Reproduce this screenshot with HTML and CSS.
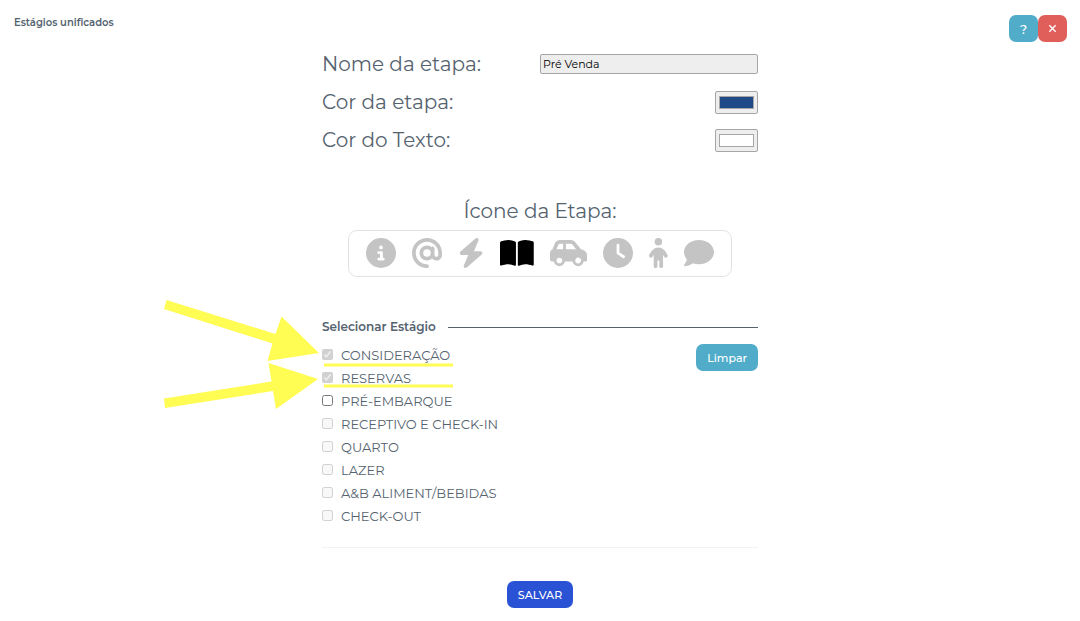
FILE: index.html
```html
<!DOCTYPE html>
<html lang="pt-BR">
  <head>
    <meta charset="UTF-8" />
    <meta name="viewport" content="width=device-width, initial-scale=1.0" />
    <title>Estágios unificados</title>
    <link rel="stylesheet" href="styles.css">
  </head>
  <body>
    <header class="header">
      <h1 class="title">Estágios unificados</h1>
      <div class="header-actions">
        <button type="button" class="btn btn-info btn-icon" aria-label="Ajuda">?</button>
        <button type="button" class="btn btn-danger btn-icon" aria-label="Fechar">
          <svg class="close-icon" viewBox="0 0 10 10"><path d="M1.5 1.5l7 7M8.5 1.5l-7 7" /></svg>
        </button>
      </div>
    </header>

    <form class="stage-form">
      <div class="form-row">
        <label class="form-label" for="stageName">Nome da etapa:</label>
        <input type="text" id="stageName" class="form-input" value="Pré Venda" />
      </div>
      <div class="form-row">
        <label class="form-label" for="stageColor">Cor da etapa:</label>
        <input type="color" id="stageColor" class="color-input" value="#204a87" />
      </div>
      <div class="form-row">
        <label class="form-label" for="textColor">Cor do Texto:</label>
        <input type="color" id="textColor" class="color-input" value="#ffffff" />
      </div>

      <section class="icon-section">
        <h2 class="form-label">Ícone da Etapa:</h2>
        <div class="icon-picker">
          <button type="button" class="icon-btn" aria-label="Informação">
            <svg viewBox="0 0 512 512"><path d="M256 512A256 256 0 1 0 256 0a256 256 0 1 0 0 512zM216 336h24V272H216c-13.3 0-24-10.7-24-24s10.7-24 24-24h48c13.3 0 24 10.7 24 24v88h8c13.3 0 24 10.7 24 24s-10.7 24-24 24H216c-13.3 0-24-10.7-24-24s10.7-24 24-24zm40-208a32 32 0 1 1 0 64 32 32 0 1 1 0-64z" /></svg>
          </button>
          <button type="button" class="icon-btn" aria-label="E-mail">
            <svg viewBox="0 0 512 512"><path d="M256 64C150 64 64 150 64 256s86 192 192 192c17.7 0 32 14.3 32 32s-14.3 32-32 32C114.6 512 0 397.4 0 256S114.6 0 256 0S512 114.6 512 256v32c0 53-43 96-96 96c-29.3 0-55.6-13.2-73.2-33.9C320 371.1 289.5 384 256 384c-70.7 0-128-57.3-128-128s57.3-128 128-128c27.9 0 53.7 8.9 74.7 24.1c5.7-5 13.1-8.1 21.3-8.1c17.7 0 32 14.3 32 32v80 32c0 17.7 14.3 32 32 32s32-14.3 32-32V256c0-106-86-192-192-192zm64 192a64 64 0 1 0 -128 0 64 64 0 1 0 128 0z" /></svg>
          </button>
          <button type="button" class="icon-btn" aria-label="Raio">
            <svg viewBox="0 0 448 512"><path d="M349.4 44.6c5.9-13.7 1.5-29.7-10.6-38.5s-28.6-8-39.9 1.8l-256 224c-10 8.8-13.6 22.9-8.9 35.3S50.7 288 64 288H175.5L98.6 467.4c-5.9 13.7-1.5 29.7 10.6 38.5s28.6 8 39.9-1.8l256-224c10-8.8 13.6-22.9 8.9-35.3s-16.6-20.7-30-20.7H272.5L349.4 44.6z" /></svg>
          </button>
          <button type="button" class="icon-btn active" aria-label="Livro">
            <svg viewBox="0 0 576 512"><path d="M249.6 471.5c10.8 3.8 22.4-4.1 22.4-15.5V78.6c0-4.2-1.6-8.4-5-11C247.4 52 202.4 32 144 32C93.5 32 46.3 45.3 18.1 56.1C6.8 60.5 0 71.7 0 83.8V454.1c0 11.9 12.8 20.2 24.1 16.5C55.6 460.1 105.5 448 144 448c33.9 0 79 14 105.6 23.5zm76.8 0C353 462 398.1 448 432 448c38.5 0 88.4 12.1 119.9 22.6c11.3 3.8 24.1-4.6 24.1-16.5V83.8c0-12.1-6.8-23.3-18.1-27.6C529.7 45.3 482.5 32 432 32c-58.4 0-103.4 20-123 35.6c-3.3 2.6-5 6.8-5 11V456c0 11.4 11.7 19.3 22.4 15.5z" /></svg>
          </button>
          <button type="button" class="icon-btn" aria-label="Carro">
            <svg viewBox="0 0 640 512"><path d="M171.3 96H224v96H111.3l30.4-75.9C146.5 104 158.2 96 171.3 96zM272 192V96h81.2c9.7 0 18.9 4.4 25 12l67 84H272zm256.2 1L428.2 68c-18.2-22.8-45.8-36-75-36H171.3c-39.3 0-74.6 23.9-89.1 60.3L40.6 196.4C16.8 205.8 0 228.9 0 256V368c0 17.7 14.3 32 32 32H65.3c7.6 45.4 47.1 80 94.7 80s87.1-34.6 94.7-80H385.3c7.6 45.4 47.1 80 94.7 80s87.1-34.6 94.7-80H608c17.7 0 32-14.3 32-32V320c0-65.2-48.8-119-111.8-127zM434.7 368a48 48 0 1 1 90.5 32 48 48 0 1 1 -90.5-32zM160 336a48 48 0 1 1 0 96 48 48 0 1 1 0-96z" /></svg>
          </button>
          <button type="button" class="icon-btn" aria-label="Relógio">
            <svg viewBox="0 0 512 512"><path d="M256 0a256 256 0 1 1 0 512A256 256 0 1 1 256 0zM232 120V256c0 8 4 15.5 10.7 20l96 64c11 7.4 25.9 4.4 33.3-6.7s4.4-25.9-6.7-33.3L280 243.2V120c0-13.3-10.7-24-24-24s-24 10.7-24 24z" /></svg>
          </button>
          <button type="button" class="icon-btn" aria-label="Pessoa">
            <svg viewBox="0 0 320 512"><path d="M96 64a64 64 0 1 1 128 0A64 64 0 1 1 96 64zm48 320v96c0 17.7-14.3 32-32 32s-32-14.3-32-32V287.8L59.1 321c-9.4 15-29.2 19.4-44.1 10S-4.5 301.9 4.9 287l39.9-63.3C69.7 184 113.2 160 160 160s90.3 24 115.2 63.6L315.1 287c9.4 15 4.9 34.7-10 44.1s-34.7 4.9-44.1-10L240 287.8V480c0 17.7-14.3 32-32 32s-32-14.3-32-32V384H144z" /></svg>
          </button>
          <button type="button" class="icon-btn" aria-label="Comentário">
            <svg viewBox="0 0 512 512"><path d="M512 240c0 114.9-114.6 208-256 208c-37.1 0-72.3-6.4-104.1-17.9c-11.9 8.7-31.3 20.6-54.3 30.6C73.6 471.1 44.7 480 16 480c-6.5 0-12.3-3.9-14.8-9.9c-2.5-6-1.1-12.8 3.4-17.4l.3-.3c.3-.3 .7-.7 1.3-1.4c1.1-1.2 2.8-3.1 4.9-5.7c4.1-5 9.6-12.4 15.2-21.6c10-16.6 19.5-38.4 21.4-62.9C17.7 326.8 0 285.1 0 240C0 125.1 114.6 32 256 32s256 93.1 256 208z" /></svg>
          </button>
        </div>
      </section>

      <section class="stages">
        <h2 class="stages-title">Selecionar Estágio</h2>
        <div class="stages-body">
          <div class="stages-list">
            <label class="check-row"><input type="checkbox" checked disabled /> CONSIDERAÇÃO</label>
            <label class="check-row"><input type="checkbox" checked disabled /> RESERVAS</label>
            <label class="check-row"><input type="checkbox" /> PRÉ-EMBARQUE</label>
            <label class="check-row"><input type="checkbox" disabled /> RECEPTIVO E CHECK-IN</label>
            <label class="check-row"><input type="checkbox" disabled /> QUARTO</label>
            <label class="check-row"><input type="checkbox" disabled /> LAZER</label>
            <label class="check-row"><input type="checkbox" disabled /> A&amp;B ALIMENT/BEBIDAS</label>
            <label class="check-row"><input type="checkbox" disabled /> CHECK-OUT</label>
          </div>
          <button type="button" class="btn btn-info">Limpar</button>
        </div>

        <!-- arrows and underlines over the first two stages -->
        <svg class="marks" viewBox="0 0 292 112" aria-hidden="true">
          <path d="M2.5 0L111.5 34L117.5 16.5L155 53L103.5 61L108.5 43.5L0 9Z" />
          <path d="M0 98.500L107.500 81.500L104.500 63L154 79L112 109L109 91L1 108Z" />
          <path d="M160 63.500h129v3h-129zM160 84.500h129v3h-129z" />
        </svg>
      </section>

      <div class="footer-actions">
        <button type="submit" class="btn btn-primary">SALVAR</button>
      </div>
    </form>
  </body>
</html>
```

FILE: styles.css
```css
:root {
  --primary: #2a52d4;
  --info: #50acc9;
  --danger: #e05f5b;
  --text: #55636f;
  --icon: #c4c4c4;
  --mark: #fffc54;
}

* {
  box-sizing: border-box;
}

body {
  margin: 0;
  font-family: "Montserrat", "Inter", sans-serif;
  font-size: 13px;
  color: var(--text);
  background-color: #ffffff;
}

.header {
  display: flex;
  justify-content: space-between;
  align-items: flex-start;
  padding: 15px 13px 0 14px;
}

.title {
  margin: 0;
  font-size: 10px;
  line-height: 16px;
  font-weight: 600;
}

.header-actions {
  display: flex;
}

.btn {
  height: 27px;
  padding: 0 11px;
  border: none;
  border-radius: 7px;
  font-family: inherit;
  font-size: 11px;
  font-weight: 500;
  color: #ffffff;
  cursor: pointer;
  display: inline-flex;
  align-items: center;
  justify-content: center;
}

.btn-icon {
  width: 29px;
  padding: 0;
  font-size: 13px;
}

.btn-info {
  background-color: var(--info);
}

.btn-danger {
  background-color: var(--danger);
}

.btn-primary {
  background-color: var(--primary);
}

.btn:hover {
  opacity: 0.9;
}

.close-icon {
  width: 9px;
  height: 9px;
  fill: none;
  stroke: currentColor;
  stroke-width: 1.5;
}

.stage-form {
  width: 90%;
  max-width: 436px;
  margin: 3px auto 0;
}

.form-row {
  display: flex;
  justify-content: space-between;
  align-items: center;
  height: 38px;
}

.form-label {
  margin: 0;
  font-size: 20px;
  line-height: 26px;
  font-weight: 400;
}

.form-input {
  width: 50%;
  height: 20px;
  padding: 1px 2px;
  border: 1px solid #a6a6a6;
  border-radius: 2px;
  background-color: #eeeeee;
  font-family: inherit;
  font-size: 11px;
  color: #000000;
}

.color-input {
  width: 43px;
  height: 23px;
  padding: 0 1px;
  border: 1px solid #a6a6a6;
  border-radius: 2px;
  background-color: #eeeeee;
}

.color-input::-webkit-color-swatch {
  border: 1px solid #a6a6a6;
}

.icon-section {
  display: flex;
  flex-direction: column;
  align-items: center;
  gap: 6px;
  margin-top: 39px;
}

.icon-picker {
  display: flex;
  align-items: center;
  gap: 16px;
  padding: 7px 17px 8px;
  border: 1px solid #e2e2e2;
  border-radius: 9px;
}

.icon-btn {
  display: flex;
  padding: 0;
  border: none;
  background: none;
  color: var(--icon);
  cursor: pointer;
}

.icon-btn svg {
  height: 30px;
  fill: currentColor;
}

.icon-btn.active {
  color: #000000;
}

.stages {
  position: relative;
  margin-top: 41px;
  padding-bottom: 19px;
  border-bottom: 1px solid #f3f3f3;
}

.stages-title {
  display: flex;
  align-items: center;
  gap: 12px;
  margin: 0;
  font-size: 12px;
  line-height: 18px;
  font-weight: 600;
}

.stages-title::after {
  content: "";
  flex: 1;
  border-top: 1px solid var(--text);
}

.stages-body {
  display: flex;
  justify-content: space-between;
  align-items: flex-start;
  padding-top: 8px;
}

.stages-list {
  display: flex;
  flex-direction: column;
}

.check-row {
  display: flex;
  align-items: center;
  gap: 8px;
  line-height: 23px;
}

.check-row input {
  width: 11px;
  height: 11px;
  margin: 0 0 3px;
}

.marks {
  position: absolute;
  top: -18px;
  left: -158px;
  width: 292px;
  fill: var(--mark);
  pointer-events: none;
}

.footer-actions {
  display: flex;
  justify-content: center;
  padding: 33px 0 13px;
}
```
